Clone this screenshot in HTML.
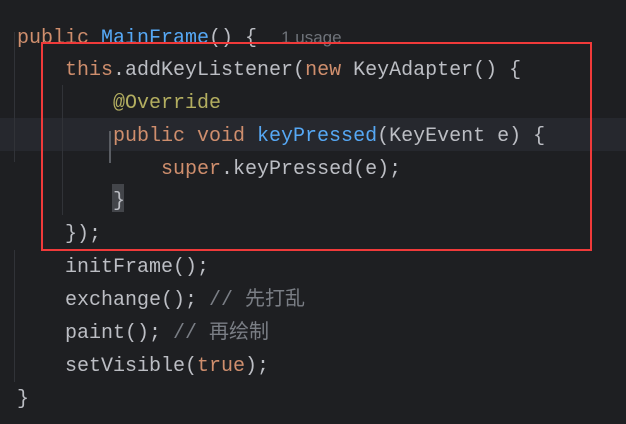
<html><head><style>
body{margin:0;width:626px;height:424px;background:#1e1f22;overflow:hidden;position:relative;font-family:"Liberation Mono","Noto Sans CJK SC",monospace;font-size:20px;color:#bcbec4}
.l{position:absolute;left:17px;height:33px;line-height:33px;white-space:pre}
.k{color:#cf8e6d}.f{color:#56a8f5}.a{color:#b3ae60}.c{color:#7a7e85}.u{color:#6f737a;font-family:"Liberation Sans",sans-serif;font-size:17px}
.g{position:absolute;width:1px;background:#313338}
</style></head><body>
<div style="position:absolute;left:0;top:118px;width:626px;height:33px;background:#26282e"></div>
<div class="g" style="left:14px;top:32px;height:130px"></div>
<div class="g" style="left:14px;top:250px;height:132px"></div>
<div class="g" style="left:62px;top:85px;height:130px"></div>
<div style="position:absolute;left:109px;top:131px;width:2px;height:32px;background:#5a5d63"></div>
<div style="position:absolute;left:112px;top:184px;width:12px;height:28px;background:#43454a"></div>
<div class="l" style="top:21px"><span class="k">public </span><span class="f">MainFrame</span>() {  <span class="u">1 usage</span></div>
<div class="l" style="top:54px">    <span class="k">this</span>.addKeyListener(<span class="k">new </span>KeyAdapter() {</div>
<div class="l" style="top:87px">        <span class="a">@Override</span></div>
<div class="l" style="top:120px">        <span class="k">public void </span><span class="f">keyPressed</span>(KeyEvent e) {</div>
<div class="l" style="top:153px">            <span class="k">super</span>.keyPressed(e);</div>
<div class="l" style="top:185px">        }</div>
<div class="l" style="top:218px">    });</div>
<div class="l" style="top:251px">    initFrame();</div>
<div class="l" style="top:284px">    exchange(); <span class="c">// 先打乱</span></div>
<div class="l" style="top:317px">    paint(); <span class="c">// 再绘制</span></div>
<div class="l" style="top:350px">    setVisible(<span class="k">true</span>);</div>
<div class="l" style="top:383px">}</div>
<div style="position:absolute;left:41px;top:42px;width:547px;height:205px;border:2px solid #f03a3a"></div>
</body></html>
